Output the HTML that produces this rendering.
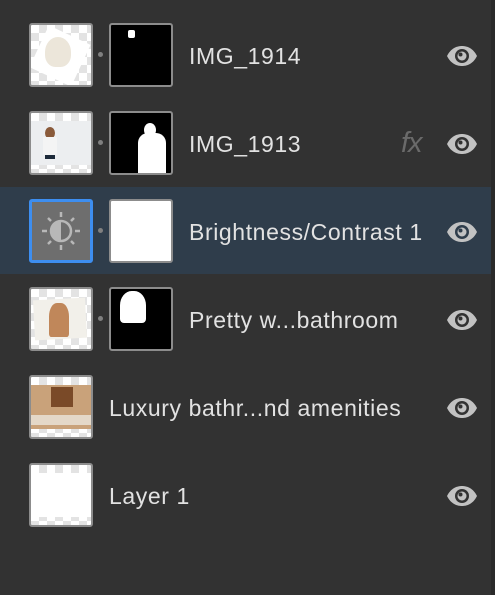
<!DOCTYPE html>
<html><head><style>
body{margin:0;width:495px;height:595px;background:#323232;position:relative;overflow:hidden;font-family:"Liberation Sans",sans-serif}
.strip{position:absolute;left:491px;top:0;width:4px;height:595px;background:#2a2a2a}
.band{position:absolute;left:0;top:187px;width:491px;height:87px;background:#2f3d4b}
.th{position:absolute;width:60px;height:60px;border:2px solid #8c8c8c;border-radius:3px;overflow:hidden;
background-color:#fff;background-image:linear-gradient(45deg,#e3e3e3 25%,transparent 25%,transparent 75%,#e3e3e3 75%),linear-gradient(45deg,#e3e3e3 25%,transparent 25%,transparent 75%,#e3e3e3 75%);background-size:16px 16px;background-position:0 0,8px 8px}
.mk{position:absolute;width:60px;height:60px;border:2px solid #8c8c8c;border-radius:3px;background:#000;overflow:hidden}
.dot{position:absolute;width:5px;height:5px;border-radius:50%;background:#808080}
.t{position:absolute;color:#e2e2e2;font-size:23px;line-height:26px;white-space:nowrap;letter-spacing:0.6px}
.eye{position:absolute;left:446px}
</style></head><body>
<div class="band"></div><div class="strip"></div>

<div class="th" style="left:29px;top:23px"><div style="position:absolute;left:6px;top:8px;width:46px;height:46px;background:#fff;transform:rotate(25deg)"></div><div style="position:absolute;left:14px;top:12px;width:26px;height:30px;background:#ece6da;border-radius:50% 50% 40% 40%"></div></div>
<div class="dot" style="left:98px;top:52px"></div>
<div class="mk" style="left:109px;top:23px"><div style="position:absolute;left:17px;top:5px;width:7px;height:8px;background:#fff;border-radius:2px"></div></div>
<div class="t" style="left:189px;top:43px">IMG_1914</div>

<div class="th" style="left:29px;top:111px"><div style="position:absolute;left:0;top:8px;width:60px;height:44px;background:#eceef0"></div><div style="position:absolute;left:14px;top:14px;width:10px;height:12px;background:#8a5a3a;border-radius:50%"></div><div style="position:absolute;left:12px;top:24px;width:14px;height:18px;background:#f4f4f4"></div><div style="position:absolute;left:14px;top:42px;width:10px;height:4px;background:#1d2a3a"></div></div>
<div class="dot" style="left:98px;top:140px"></div>
<div class="mk" style="left:109px;top:111px"><div style="position:absolute;left:33px;top:10px;width:12px;height:14px;background:#fff;border-radius:50%"></div><div style="position:absolute;left:27px;top:20px;width:28px;height:42px;background:#fff;border-radius:10px 10px 0 0"></div></div>
<div class="t" style="left:189px;top:131px">IMG_1913</div>
<div style="position:absolute;left:401px;top:127px;color:#6a6a6a;font-size:29px;font-style:italic;font-family:'Liberation Sans',sans-serif;letter-spacing:-1px">fx</div>

<div style="position:absolute;left:29px;top:199px;width:58px;height:58px;border:3px solid #3d8ef0;border-radius:3px;background:#6e6e6e"></div>
<svg style="position:absolute;left:35px;top:205px" width="52" height="52" viewBox="0 0 52 52"><g stroke="#b8b8b8" stroke-width="2.5"><line x1="26" y1="7" x2="26" y2="12"/><line x1="26" y1="40" x2="26" y2="45"/><line x1="7" y1="26" x2="12" y2="26"/><line x1="40" y1="26" x2="45" y2="26"/><line x1="13" y1="13" x2="16" y2="16"/><line x1="36" y1="36" x2="39" y2="39"/><line x1="39" y1="13" x2="36" y2="16"/><line x1="13" y1="39" x2="16" y2="36"/></g><circle cx="26" cy="26" r="10" fill="none" stroke="#b8b8b8" stroke-width="2.5"/><path d="M26 16a10 10 0 0 0 0 20z" fill="#b8b8b8"/></svg>
<div class="dot" style="left:98px;top:228px"></div>
<div class="mk" style="left:109px;top:199px;background:#fff"></div>
<div class="t" style="left:189px;top:219px">Brightness/Contrast 1</div>

<div class="th" style="left:29px;top:287px"><div style="position:absolute;left:3px;top:10px;width:52px;height:40px;background:#f2f0ea;transform:rotate(-3deg)"></div><div style="position:absolute;left:18px;top:14px;width:20px;height:34px;background:#c0875a;border-radius:40% 40% 10% 10%"></div></div>
<div class="dot" style="left:98px;top:316px"></div>
<div class="mk" style="left:109px;top:287px"><div style="position:absolute;left:9px;top:2px;width:26px;height:32px;background:#fff;border-radius:45% 45% 4px 4px"></div></div>
<div class="t" style="left:189px;top:307px">Pretty w...bathroom</div>

<div class="th" style="left:29px;top:375px"><div style="position:absolute;left:0;top:8px;width:60px;height:44px;background:#c9a27a"></div><div style="position:absolute;left:20px;top:10px;width:22px;height:20px;background:#7a4a28"></div><div style="position:absolute;left:0;top:38px;width:60px;height:10px;background:#e4d8c8"></div></div>
<div class="t" style="left:109px;top:395px">Luxury bathr...nd amenities</div>

<div class="th" style="left:29px;top:463px"><div style="position:absolute;left:0;top:8px;width:60px;height:44px;background:#fff"></div></div>
<div class="t" style="left:109px;top:483px">Layer 1</div>

<svg class="eye" style="top:45px" width="32" height="22" viewBox="0 0 32 22"><path d="M1 11C5 3 11 1 16 1s11 2 15 10c-4 8-10 10-15 10S5 19 1 11z" fill="#c2c2c2"/><circle cx="16" cy="11" r="7" fill="#323232"/><circle cx="16" cy="11" r="4.5" fill="#c2c2c2"/><circle cx="14.5" cy="9.5" r="2" fill="#323232"/></svg>
<svg class="eye" style="top:133px" width="32" height="22" viewBox="0 0 32 22"><path d="M1 11C5 3 11 1 16 1s11 2 15 10c-4 8-10 10-15 10S5 19 1 11z" fill="#c2c2c2"/><circle cx="16" cy="11" r="7" fill="#323232"/><circle cx="16" cy="11" r="4.5" fill="#c2c2c2"/><circle cx="14.5" cy="9.5" r="2" fill="#323232"/></svg>
<svg class="eye" style="top:221px" width="32" height="22" viewBox="0 0 32 22"><path d="M1 11C5 3 11 1 16 1s11 2 15 10c-4 8-10 10-15 10S5 19 1 11z" fill="#c2c2c2"/><circle cx="16" cy="11" r="7" fill="#2f3d4b"/><circle cx="16" cy="11" r="4.5" fill="#c2c2c2"/><circle cx="14.5" cy="9.5" r="2" fill="#2f3d4b"/></svg>
<svg class="eye" style="top:309px" width="32" height="22" viewBox="0 0 32 22"><path d="M1 11C5 3 11 1 16 1s11 2 15 10c-4 8-10 10-15 10S5 19 1 11z" fill="#c2c2c2"/><circle cx="16" cy="11" r="7" fill="#323232"/><circle cx="16" cy="11" r="4.5" fill="#c2c2c2"/><circle cx="14.5" cy="9.5" r="2" fill="#323232"/></svg>
<svg class="eye" style="top:397px" width="32" height="22" viewBox="0 0 32 22"><path d="M1 11C5 3 11 1 16 1s11 2 15 10c-4 8-10 10-15 10S5 19 1 11z" fill="#c2c2c2"/><circle cx="16" cy="11" r="7" fill="#323232"/><circle cx="16" cy="11" r="4.5" fill="#c2c2c2"/><circle cx="14.5" cy="9.5" r="2" fill="#323232"/></svg>
<svg class="eye" style="top:485px" width="32" height="22" viewBox="0 0 32 22"><path d="M1 11C5 3 11 1 16 1s11 2 15 10c-4 8-10 10-15 10S5 19 1 11z" fill="#c2c2c2"/><circle cx="16" cy="11" r="7" fill="#323232"/><circle cx="16" cy="11" r="4.5" fill="#c2c2c2"/><circle cx="14.5" cy="9.5" r="2" fill="#323232"/></svg>
</body></html>
